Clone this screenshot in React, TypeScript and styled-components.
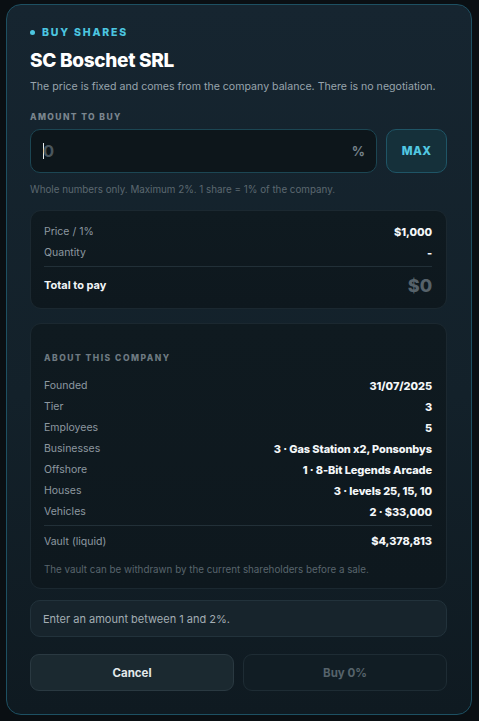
import React from 'react';
import styled, { createGlobalStyle } from 'styled-components';

const GlobalStyle = createGlobalStyle`
  html, body {
    margin: 0;
    padding: 0;
    background: #0a0f13;
  }
  body {
    font-family: Inter, "Noto Sans", "Liberation Sans", sans-serif;
    color: #e8edf0;
  }
  * { box-sizing: border-box; }
`;

const Page = styled.div`
  width: 479px;
  height: 721px;
  padding: 4px 7px 6px 6px;
  background: #0a0f13;
`;

const Modal = styled.div`
  height: 100%;
  border: 1px solid #1d5062;
  border-radius: 15px;
  background: linear-gradient(180deg, #162530 0%, #13212a 55%, #0f1a21 100%);
  padding: 21px 24px 22px 23px;
  display: flex;
  flex-direction: column;
  & > * { flex-shrink: 0; }
`;

const Eyebrow = styled.div`
  display: flex;
  align-items: center;
  gap: 7px;
  font-size: 10.5px;
  font-weight: 800;
  letter-spacing: 1.8px;
  color: #4cc6e0;
  &::before {
    content: '';
    width: 5px;
    height: 5px;
    border-radius: 50%;
    background: #4cc6e0;
  }
`;

const Title = styled.h1`
  margin: 10px 0 0;
  font-size: 19px;
  font-weight: 800;
  letter-spacing: -0.3px;
  color: #ffffff;
`;

const Lead = styled.p`
  margin: 8px 0 0;
  font-size: 10.6px;
  color: #98a4ad;
  white-space: nowrap;
`;

const FieldLabel = styled.div`
  margin-top: 19px;
  font-size: 8.5px;
  font-weight: 800;
  letter-spacing: 1.4px;
  color: #7b868e;
`;

const AmountRow = styled.div`
  margin-top: 7px;
  display: flex;
  gap: 9px;
`;

const InputBox = styled.div`
  flex: 1;
  height: 44px;
  border: 1px solid #1c4653;
  border-radius: 10px;
  background: #0d161b;
  display: flex;
  align-items: center;
  padding: 0 11px 0 12px;
`;

const Caret = styled.span`
  width: 1px;
  height: 16px;
  margin-right: -1px;
  background: #e8edf0;
`;

const Placeholder = styled.span`
  flex: 1;
  font-size: 16.5px;
  font-weight: 700;
  color: #4a565e;
`;

const Suffix = styled.span`
  font-size: 13px;
  font-weight: 700;
  color: #76828a;
`;

const MaxButton = styled.button`
  width: 61px;
  height: 44px;
  border: 1px solid #1f5566;
  border-radius: 10px;
  background: #15303a;
  color: #52c8e2;
  font-family: inherit;
  font-size: 11.5px;
  font-weight: 800;
  letter-spacing: 0.4px;
`;

const Hint = styled.div`
  margin-top: 11px;
  font-size: 9.8px;
  color: #5c6870;
`;

const Card = styled.div<{ $top: number; $pad: string }>`
  margin-top: ${(p) => p.$top}px;
  border: 1px solid #1b2830;
  border-radius: 11px;
  background: linear-gradient(180deg, #0f1a20 0%, #0e181e 100%);
  padding: ${(p) => p.$pad};
  display: flex;
  flex-direction: column;
`;

const Row = styled.div<{ $h?: number }>`
  height: ${(p) => p.$h ?? 21}px;
  display: flex;
  align-items: center;
  justify-content: space-between;
`;

const Key = styled.span<{ $strong?: boolean }>`
  font-size: ${(p) => (p.$strong ? 11 : 10.5)}px;
  font-weight: ${(p) => (p.$strong ? 700 : 400)};
  color: ${(p) => (p.$strong ? '#f2f5f7' : '#8d98a0')};
`;

const Val = styled.span<{ $size?: number; $muted?: boolean }>`
  font-size: ${(p) => p.$size ?? 11}px;
  font-weight: 800;
  letter-spacing: -0.1px;
  color: ${(p) => (p.$muted ? '#56626a' : '#f4f7f9')};
`;

const Divider = styled.div`
  height: 1px;
  background: #223038;
  margin: 3px 0;
`;

const SectionTitle = styled.div`
  margin: 0 0 12px;
  font-size: 8.5px;
  font-weight: 800;
  letter-spacing: 1.5px;
  color: #6e7a82;
`;

const Note = styled.div`
  margin-top: 11px;
  font-size: 9.8px;
  color: #59656d;
`;

const Notice = styled.div`
  margin-top: 11px;
  height: 37px;
  border: 1px solid #22323b;
  border-radius: 10px;
  background: #17242c;
  display: flex;
  align-items: center;
  padding: 0 12px;
  font-size: 11px;
  color: #a3adb3;
`;

const Actions = styled.div`
  margin-top: 17px;
  display: grid;
  grid-template-columns: 1fr 1fr;
  gap: 9px;
`;

const Action = styled.button<{ $disabled?: boolean }>`
  height: 37px;
  border: 1px solid ${(p) => (p.$disabled ? '#1e2c34' : '#2a3941')};
  border-radius: 9px;
  background: ${(p) => (p.$disabled ? '#111d24' : '#1b2930')};
  color: ${(p) => (p.$disabled ? '#56636b' : '#e3e8eb')};
  font-family: inherit;
  font-size: 11.5px;
  font-weight: 700;
`;

const facts: [string, string][] = [
  ['Founded', '31/07/2025'],
  ['Tier', '3'],
  ['Employees', '5'],
  ['Businesses', '3 · Gas Station x2, Ponsonbys'],
  ['Offshore', '1 · 8-Bit Legends Arcade'],
  ['Houses', '3 · levels 25, 15, 10'],
  ['Vehicles', '2 · $33,000'],
];

export default function App() {
  return (
    <>
      <GlobalStyle />
      <Page>
        <Modal>
          <Eyebrow>BUY SHARES</Eyebrow>
          <Title>SC Boschet SRL</Title>
          <Lead>The price is fixed and comes from the company balance. There is no negotiation.</Lead>

          <FieldLabel>AMOUNT TO BUY</FieldLabel>
          <AmountRow>
            <InputBox>
              <Caret />
              <Placeholder>0</Placeholder>
              <Suffix>%</Suffix>
            </InputBox>
            <MaxButton>MAX</MaxButton>
          </AmountRow>
          <Hint>Whole numbers only. Maximum 2%. 1 share = 1% of the company.</Hint>

          <Card $top={15} $pad="10px 14px 8px 13px">
            <Row>
              <Key>Price / 1%</Key>
              <Val>$1,000</Val>
            </Row>
            <Row>
              <Key>Quantity</Key>
              <Val>-</Val>
            </Row>
            <Divider />
            <Row $h={30}>
              <Key $strong>Total to pay</Key>
              <Val $size={18} $muted>$0</Val>
            </Row>
          </Card>

          <Card $top={14} $pad="29px 14px 13px 13px">
            <SectionTitle>ABOUT THIS COMPANY</SectionTitle>
            {facts.map(([k, v]) => (
              <Row key={k}>
                <Key>{k}</Key>
                <Val>{v}</Val>
              </Row>
            ))}
            <Divider />
            <Row $h={24}>
              <Key>Vault (liquid)</Key>
              <Val>$4,378,813</Val>
            </Row>
            <Note>The vault can be withdrawn by the current shareholders before a sale.</Note>
          </Card>

          <Notice>Enter an amount between 1 and 2%.</Notice>

          <Actions>
            <Action>Cancel</Action>
            <Action $disabled>Buy 0%</Action>
          </Actions>
        </Modal>
      </Page>
    </>
  );
}
